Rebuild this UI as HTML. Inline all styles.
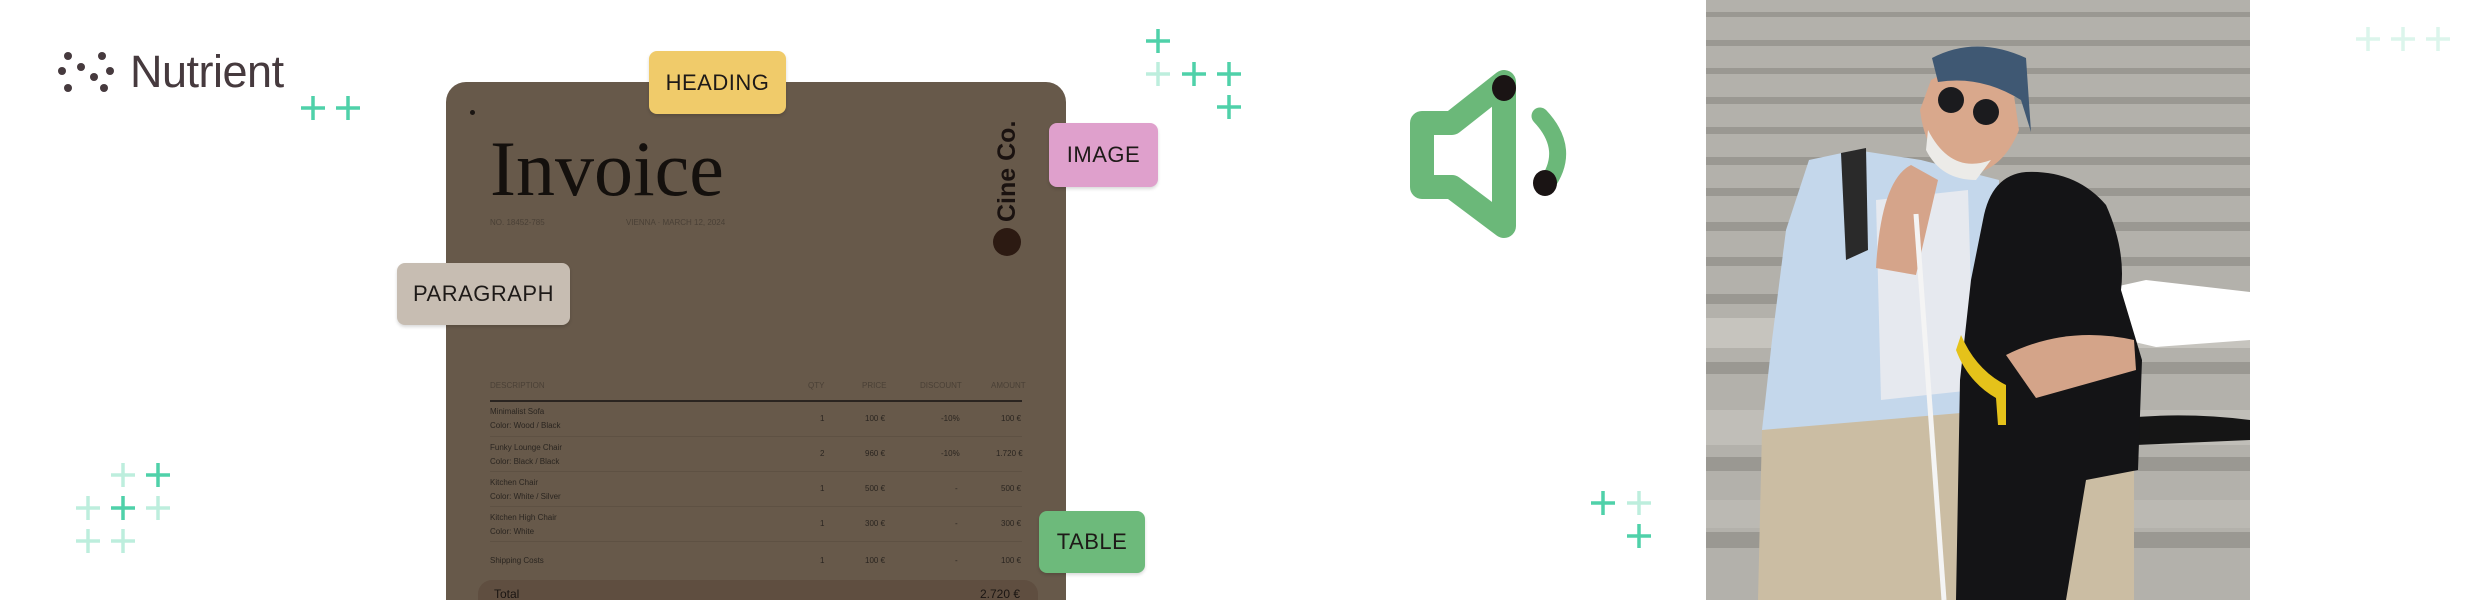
<!DOCTYPE html>
<html><head><meta charset="utf-8"><style>
html,body{margin:0;padding:0;background:#fff;width:2481px;height:600px;overflow:hidden;}
body{position:relative;font-family:"Liberation Sans",sans-serif;}
.abs{position:absolute;}
.tag{position:absolute;border-radius:8px;font-size:22px;color:#1e1a18;display:flex;align-items:center;justify-content:center;letter-spacing:0.5px;box-shadow:0 2px 3px rgba(0,0,0,0.15);}
.sm{position:absolute;font-size:8px;color:#2a2520;}
</style></head><body>

<svg class="abs" style="left:0;top:0" width="2481" height="600">
<g stroke-width="3.5" fill="none">
<g stroke="#4fd1a9">
<path d="M313 96v24M301 108h24"/><path d="M348 96v24M336 108h24"/>
<path d="M1158 29v24M1146 41h24"/>
<path d="M1194 62v24M1182 74h24"/><path d="M1229 62v24M1217 74h24"/>
<path d="M1229 95v24M1217 107h24"/>
<path d="M158 463v24M146 475h24"/>
<path d="M123 496v24M111 508h24"/>
<path d="M1603 491v24M1591 503h24"/>
<path d="M1639 524v24M1627 536h24"/>
</g>
<g stroke="#bdeedd">
<path d="M1158 62v24M1146 74h24"/>
<path d="M123 463v24M111 475h24"/>
<path d="M88 496v24M76 508h24"/><path d="M158 496v24M146 508h24"/>
<path d="M88 529v24M76 541h24"/><path d="M123 529v24M111 541h24"/>
<path d="M1639 491v24M1627 503h24"/>
</g>
<g stroke="#dcf5ec">
<path d="M2368 27v24M2356 39h24"/><path d="M2403 27v24M2391 39h24"/><path d="M2438 27v24M2426 39h24"/>
</g>
</g>
</svg>

<svg class="abs" style="left:57px;top:52px" width="60" height="42">
<g fill="#463a3e">
<circle cx="11" cy="4" r="4"/><circle cx="45" cy="4" r="4"/>
<circle cx="5" cy="19" r="4"/><circle cx="24" cy="15" r="4"/><circle cx="53" cy="19" r="4"/>
<circle cx="37" cy="25" r="4"/>
<circle cx="11" cy="36" r="4"/><circle cx="47" cy="36" r="4"/>
</g>
</svg>
<div class="abs" style="left:130px;top:46px;font-size:45px;color:#463a3e;letter-spacing:-0.5px;">Nutrient</div>

<div class="abs" style="left:446px;top:82px;width:620px;height:518px;background:#67594a;border-radius:20px 20px 0 0;"></div>
<div class="abs" style="left:470px;top:110px;width:5px;height:5px;border-radius:50%;background:#1a1512"></div>
<div class="abs" style="left:490px;top:124px;font-family:'Liberation Serif',serif;font-size:78px;color:#14100d;">Invoice</div>
<div class="sm" style="left:490px;top:218px;color:#4a4036;">NO. 18452-785</div>
<div class="sm" style="left:626px;top:218px;color:#4a4036;">VIENNA · MARCH 12, 2024</div>
<div class="abs" style="left:993px;top:222px;transform:rotate(-90deg);transform-origin:left top;font-size:25px;font-weight:bold;color:#1a1210;white-space:nowrap;">Cine Co.</div>
<div class="abs" style="left:993px;top:228px;width:28px;height:28px;border-radius:50%;background:#2c1a12"></div>

<div class="sm" style="left:490px;top:381px;color:#4a4036;">DESCRIPTION</div>
<div class="sm" style="left:808px;top:381px;color:#4a4036;">QTY</div>
<div class="sm" style="left:862px;top:381px;color:#4a4036;">PRICE</div>
<div class="sm" style="left:920px;top:381px;color:#4a4036;">DISCOUNT</div>
<div class="sm" style="left:991px;top:381px;color:#4a4036;">AMOUNT</div>
<div class="abs" style="left:490px;top:400px;width:532px;height:1.5px;background:#2a2420"></div>
<div class="sm" style="left:490px;top:407px;">Minimalist Sofa<br><span style="line-height:20px">Color: Wood / Black</span></div>
<div class="sm" style="left:820px;top:414px;">1</div><div class="sm" style="left:865px;top:414px;">100 €</div><div class="sm" style="left:941px;top:414px;">-10%</div><div class="sm" style="left:1001px;top:414px;">100 €</div>
<div class="abs" style="left:490px;top:436px;width:532px;height:1px;background:#5e5143"></div>
<div class="sm" style="left:490px;top:443px;">Funky Lounge Chair<br><span style="line-height:20px">Color: Black / Black</span></div>
<div class="sm" style="left:820px;top:449px;">2</div><div class="sm" style="left:865px;top:449px;">960 €</div><div class="sm" style="left:941px;top:449px;">-10%</div><div class="sm" style="left:996px;top:449px;">1.720 €</div>
<div class="abs" style="left:490px;top:471px;width:532px;height:1px;background:#5e5143"></div>
<div class="sm" style="left:490px;top:478px;">Kitchen Chair<br><span style="line-height:20px">Color: White / Silver</span></div>
<div class="sm" style="left:820px;top:484px;">1</div><div class="sm" style="left:865px;top:484px;">500 €</div><div class="sm" style="left:955px;top:484px;">-</div><div class="sm" style="left:1001px;top:484px;">500 €</div>
<div class="abs" style="left:490px;top:506px;width:532px;height:1px;background:#5e5143"></div>
<div class="sm" style="left:490px;top:513px;">Kitchen High Chair<br><span style="line-height:20px">Color: White</span></div>
<div class="sm" style="left:820px;top:519px;">1</div><div class="sm" style="left:865px;top:519px;">300 €</div><div class="sm" style="left:955px;top:519px;">-</div><div class="sm" style="left:1001px;top:519px;">300 €</div>
<div class="abs" style="left:490px;top:541px;width:532px;height:1px;background:#5e5143"></div>
<div class="sm" style="left:490px;top:556px;">Shipping Costs</div>
<div class="sm" style="left:820px;top:556px;">1</div><div class="sm" style="left:865px;top:556px;">100 €</div><div class="sm" style="left:955px;top:556px;">-</div><div class="sm" style="left:1001px;top:556px;">100 €</div>
<div class="abs" style="left:478px;top:580px;width:560px;height:40px;background:#5f4e40;border-radius:14px;"></div>
<div class="abs" style="left:494px;top:587px;font-size:12px;color:#1a1512;">Total</div>
<div class="abs" style="left:980px;top:587px;font-size:12px;color:#1a1512;">2.720 €</div>

<div class="tag" style="left:649px;top:51px;width:137px;height:63px;background:#f0cb6a;">HEADING</div>
<div class="tag" style="left:1049px;top:123px;width:109px;height:64px;background:#dfa0cc;">IMAGE</div>
<div class="tag" style="left:397px;top:263px;width:173px;height:62px;background:#c7bdb2;">PARAGRAPH</div>
<div class="tag" style="left:1039px;top:511px;width:106px;height:62px;background:#6dba7b;">TABLE</div>

<svg class="abs" style="left:1400px;top:70px" width="180" height="170">
<path d="M22 53 H52 L104 12 V156 L52 117 H22 Z" fill="none" stroke="#6bb879" stroke-width="24" stroke-linejoin="round"/>
<path d="M140 46 Q172 80 146 115" fill="none" stroke="#6bb879" stroke-width="17" stroke-linecap="round"/>
<ellipse cx="104" cy="18" rx="12" ry="13" fill="#1a1414"/>
<ellipse cx="145" cy="113" rx="12" ry="13" fill="#1a1414"/>
</svg>

<svg class="abs" style="left:1706px;top:0" width="544" height="600">
<rect width="544" height="600" fill="#b3b1ab"/>
<g fill="#9a9892">
<rect y="12" width="544" height="5"/><rect y="40" width="544" height="6"/><rect y="68" width="544" height="6"/><rect y="97" width="544" height="7"/>
<rect y="127" width="544" height="7"/><rect y="157" width="544" height="8"/><rect y="188" width="544" height="8"/><rect y="222" width="544" height="9"/>
<rect y="257" width="544" height="9"/><rect y="294" width="544" height="10"/><rect y="362" width="544" height="12"/><rect y="457" width="544" height="14"/><rect y="532" width="544" height="16"/>
</g>
<rect y="318" width="544" height="30" fill="#c6c4be"/><rect y="410" width="544" height="35" fill="#c0beb8"/><rect y="500" width="544" height="28" fill="#bbb9b3"/>
<path d="M395 290 L440 280 L544 292 L544 340 L450 347 L420 340 Z" fill="#fff"/>
<path d="M420 418 Q480 412 544 420 L544 440 L430 445 Z" fill="#151515"/>
<path d="M103 160 L150 150 L215 160 L293 180 L293 420 L160 430 L56 430 L66 340 L80 230 Z" fill="#c4d7eb"/>
<path d="M170 200 L262 190 L268 390 L175 400 Z" fill="#e6e9ef"/>
<path d="M135 153 L160 148 L162 250 L140 260 Z" fill="#2a2a2a"/>
<path d="M56 430 L290 410 L330 440 L428 450 L428 600 L52 600 Z" fill="#cbbda3"/>
<path d="M300 440 L345 470 L330 600 L300 600 Z" fill="#b8aa8f"/>
<path d="M225 80 Q260 60 305 75 L313 130 Q295 175 255 175 Q220 160 214 110 Z" fill="#d9a88c"/>
<path d="M222 130 Q245 175 285 160 L270 180 Q235 180 220 150 Z" fill="#ecebe8"/>
<path d="M226 58 Q270 35 320 58 L325 132 L315 100 Q275 75 232 82 Z" fill="#3f5873"/>
<circle cx="245" cy="100" r="13" fill="#1b1b1e"/><circle cx="280" cy="112" r="13" fill="#1b1b1e"/>
<path d="M170 268 Q175 180 205 165 L232 180 L210 275 Z" fill="#d5a48a"/>
<path d="M277 220 Q285 175 320 172 Q370 170 400 205 Q420 250 415 290 L436 360 L432 470 L380 480 L360 600 L250 600 L254 380 L265 280 Z" fill="#141416"/>
<path d="M255 335 Q270 370 300 385 L300 425 L292 425 L290 398 Q262 382 250 350 Z" fill="#e5c21a"/>
<path d="M300 355 Q360 325 428 340 L430 370 L330 398 Z" fill="#d4a489"/>
<path d="M210 214 L238 600" stroke="#f4f4f4" stroke-width="5"/>
</svg>

</body></html>
